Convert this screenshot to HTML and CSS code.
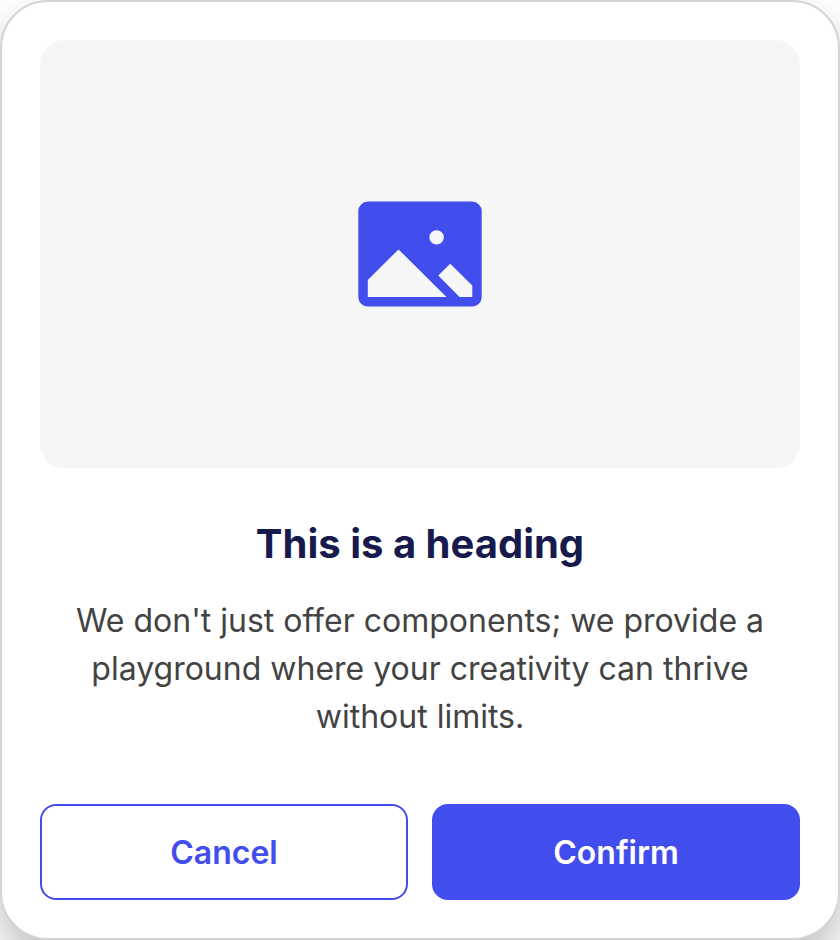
FILE: index.html
```html
<!DOCTYPE html>
<html lang="en">
<head>
<meta charset="utf-8">
<title>Dialog</title>
<link rel="stylesheet" href="styles.css">
</head>
<body>
<main class="dialog">
  <div class="media">
    <svg class="media-icon" viewBox="0 0 124 106" aria-hidden="true">
      <path fill="#414dec" fill-rule="evenodd" d="M9.8 .6H114.2A9.5 9.5 0 0 1 123.7 10.1V96A9.5 9.5 0 0 1 114.2 105.5H9.8A9.5 9.5 0 0 1 .3 96V10.1A9.5 9.5 0 0 1 9.8 .6ZM78.6 29.2A7.2 7.2 0 1 0 78.6 43.6A7.2 7.2 0 1 0 78.6 29.2ZM9.8 79V95.9H88.5L40.5 48.4ZM80.3 74.5L101.5 95.9H114.3V84.5L92.2 62.7Z"/>
    </svg>
  </div>
  <h1 class="title">This is a heading</h1>
  <p class="text">We don't just offer components; we provide a playground where your creativity can thrive without limits.</p>
  <div class="actions">
    <button class="button button-outline">Cancel</button>
    <button class="button button-solid">Confirm</button>
  </div>
</main>
</body>
</html>
```
FILE: styles.css
```css
* { box-sizing: border-box; }
html { overflow: hidden; }
body { margin: 0; background: #fff; font-family: Inter, sans-serif; }
.dialog {
  height: 940px;
  padding: 38px;
  border: 2px solid #d4d4d4;
  border-radius: 48px;
  background: #fff;
  box-shadow: 0 22px 40px rgba(0, 0, 0, 0.25);
  text-align: center;
}
.media {
  display: flex;
  align-items: center;
  justify-content: center;
  height: 428px;
  border-radius: 24px;
  background: #f6f6f6;
}
.media-icon { width: 124px; height: 106px; }
.title { margin: 48px 0 0; font-size: 40px; line-height: 56px; font-weight: 700; color: #171a4d; }
.text { margin: 25px 0 0; padding: 0 24px; font-size: 32px; line-height: 48px; color: #434343; }
.actions { display: flex; gap: 24px; margin-top: 63px; }
.button {
  flex: 1;
  height: 96px;
  padding: 2px 0 0;
  border: 2px solid #414dec;
  border-radius: 16px;
  font: 600 32px/48px Inter, sans-serif;
}
.button-outline { background: #fff; color: #414dec; }
.button-solid { background: #414dec; color: #fff; }
```
